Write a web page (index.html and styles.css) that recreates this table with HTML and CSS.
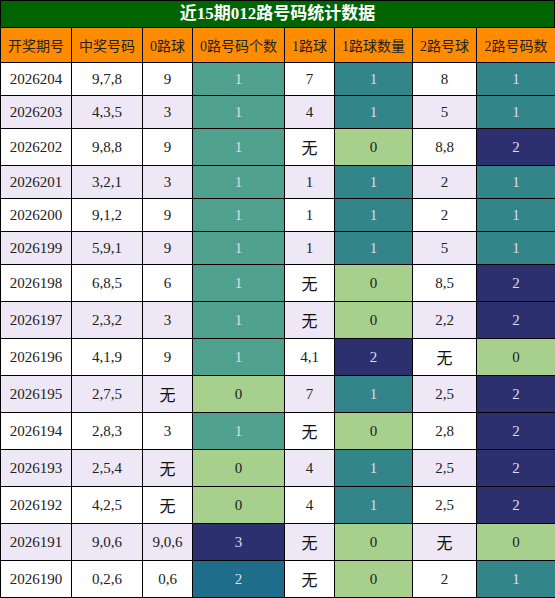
FILE: index.html
```html
<!DOCTYPE html>
<html lang="zh">
<head>
    <meta charset="UTF-8">
    <title>近15期012路号码统计数据</title>
    <link rel="stylesheet" href="styles.css">
</head>
<body>
<div class="title">近15期012路号码统计数据</div>
<table class="stats">
    <colgroup>
        <col style="width:71px"><col style="width:71px"><col style="width:50px"><col style="width:92px">
        <col style="width:50px"><col style="width:78px"><col style="width:64px"><col style="width:79px">
    </colgroup>
    <tr>
        <th>开奖期号</th><th>中奖号码</th><th>0路球</th><th>0路号码个数</th>
        <th>1路球</th><th>1路球数量</th><th>2路号球</th><th>2路号码数</th>
    </tr>
    <tr>
        <td>2026204</td><td>9,7,8</td><td>9</td><td class="c0 n1">1</td>
        <td>7</td><td class="n1">1</td><td>8</td><td class="n1">1</td>
    </tr>
    <tr>
        <td>2026203</td><td>4,3,5</td><td>3</td><td class="c0 n1">1</td>
        <td>4</td><td class="n1">1</td><td>5</td><td class="n1">1</td>
    </tr>
    <tr>
        <td>2026202</td><td>9,8,8</td><td>9</td><td class="c0 n1">1</td>
        <td><span class="none">无</span></td><td class="n0">0</td><td>8,8</td><td class="n2">2</td>
    </tr>
    <tr>
        <td>2026201</td><td>3,2,1</td><td>3</td><td class="c0 n1">1</td>
        <td>1</td><td class="n1">1</td><td>2</td><td class="n1">1</td>
    </tr>
    <tr>
        <td>2026200</td><td>9,1,2</td><td>9</td><td class="c0 n1">1</td>
        <td>1</td><td class="n1">1</td><td>2</td><td class="n1">1</td>
    </tr>
    <tr>
        <td>2026199</td><td>5,9,1</td><td>9</td><td class="c0 n1">1</td>
        <td>1</td><td class="n1">1</td><td>5</td><td class="n1">1</td>
    </tr>
    <tr>
        <td>2026198</td><td>6,8,5</td><td>6</td><td class="c0 n1">1</td>
        <td><span class="none">无</span></td><td class="n0">0</td><td>8,5</td><td class="n2">2</td>
    </tr>
    <tr>
        <td>2026197</td><td>2,3,2</td><td>3</td><td class="c0 n1">1</td>
        <td><span class="none">无</span></td><td class="n0">0</td><td>2,2</td><td class="n2">2</td>
    </tr>
    <tr>
        <td>2026196</td><td>4,1,9</td><td>9</td><td class="c0 n1">1</td>
        <td>4,1</td><td class="n2">2</td><td><span class="none">无</span></td><td class="n0">0</td>
    </tr>
    <tr>
        <td>2026195</td><td>2,7,5</td><td><span class="none">无</span></td><td class="n0">0</td>
        <td>7</td><td class="n1">1</td><td>2,5</td><td class="n2">2</td>
    </tr>
    <tr>
        <td>2026194</td><td>2,8,3</td><td>3</td><td class="c0 n1">1</td>
        <td><span class="none">无</span></td><td class="n0">0</td><td>2,8</td><td class="n2">2</td>
    </tr>
    <tr>
        <td>2026193</td><td>2,5,4</td><td><span class="none">无</span></td><td class="n0">0</td>
        <td>4</td><td class="n1">1</td><td>2,5</td><td class="n2">2</td>
    </tr>
    <tr>
        <td>2026192</td><td>4,2,5</td><td><span class="none">无</span></td><td class="n0">0</td>
        <td>4</td><td class="n1">1</td><td>2,5</td><td class="n2">2</td>
    </tr>
    <tr>
        <td>2026191</td><td>9,0,6</td><td>9,0,6</td><td class="n3">3</td>
        <td><span class="none">无</span></td><td class="n0">0</td><td><span class="none">无</span></td><td class="n0">0</td>
    </tr>
    <tr>
        <td>2026190</td><td>0,2,6</td><td>0,6</td><td class="c0 n2b">2</td>
        <td><span class="none">无</span></td><td class="n0">0</td><td>2</td><td class="n1">1</td>
    </tr>
</table>
</body>
</html>
```

FILE: styles.css
```css
* {
    margin: 0;
    padding: 0;
}

body {
    width: 555px;
    font-family: "Liberation Serif", "Noto Sans CJK SC", serif;
    background-color: #fff;
}

.title {
    height: 26px;
    line-height: 26px;
    border: 1px solid #000;
    border-bottom: none;
    background-color: #006400;
    color: #fff;
    font-size: 17px;
    font-weight: bold;
    text-align: center;
}

.stats {
    width: 555px;
    border-collapse: collapse;
    table-layout: fixed;
}

.stats th,
.stats td {
    border: 1px solid #000;
    padding: 0;
    text-align: center;
    color: #222;
}

.stats th {
    height: 34px;
    background-color: #ff8c00;
    font-size: 14px;
    font-weight: normal;
}

.stats td {
    height: 32px;
    line-height: 20px;
    font-size: 15px;
}

.stats tr:nth-child(odd) td {
    background-color: #ede7f6;
}

.stats tr:nth-child(even) td {
    background-color: #fff;
}

.none {
    display: inline-block;
    line-height: 36px;
    font-family: "Noto Sans CJK SC", sans-serif;
    font-size: 16px;
    color: #111;
}

/* count cells */
.stats tr td.n0 {
    background-color: #a7d08d;
    color: #222;
}

.stats tr td.n1 {
    background-color: #32868a;
    color: #dde;
}

.stats tr td.c0.n1 {
    background-color: #50a08e;
}

.stats tr td.n2,
.stats tr td.n3 {
    background-color: #2d306e;
    color: #dde;
}

.stats tr td.n2b {
    background-color: #1e6d8b;
    color: #dde;
}
```
